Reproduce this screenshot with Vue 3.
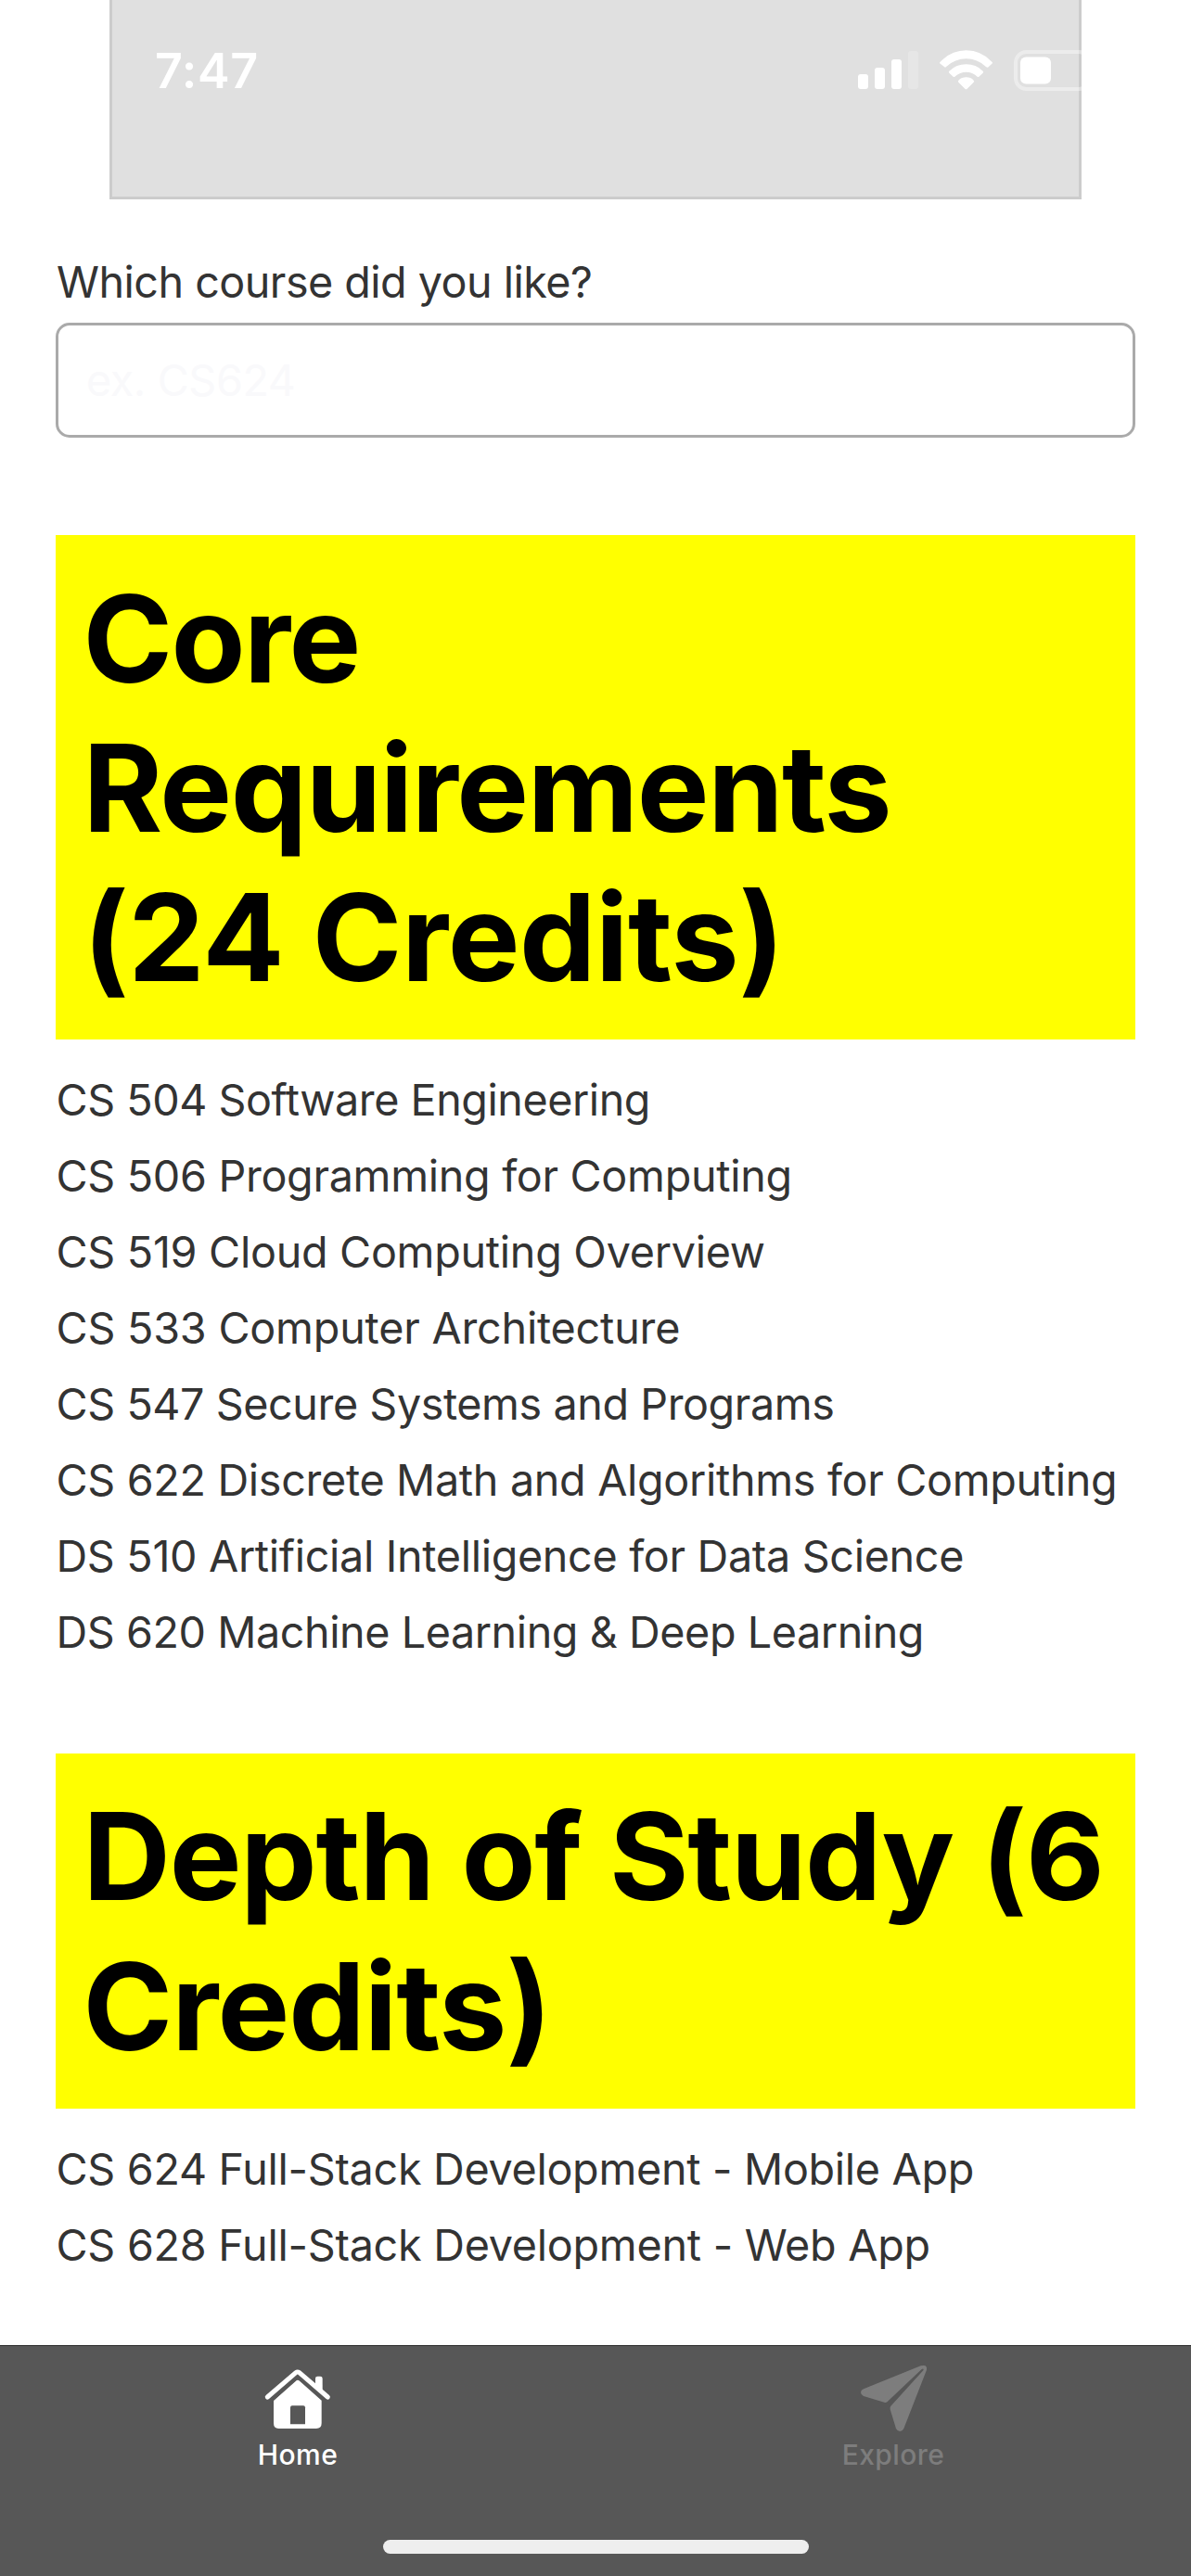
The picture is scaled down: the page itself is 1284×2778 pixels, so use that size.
<script setup>
// `tracking` is the letter spacing of a line, in pixels.
const sections = [
  {
    id: 'core',
    title: [
      { text: 'Core', tracking: -1.6 },
      { text: 'Requirements', tracking: -1.4 },
      { text: '(24 Credits)', tracking: -0.4 },
    ],
    courses: [
      { name: 'CS 504 Software Engineering', tracking: -0.46 },
      { name: 'CS 506 Programming for Computing', tracking: -0.31 },
      { name: 'CS 519 Cloud Computing Overview', tracking: -0.29 },
      { name: 'CS 533 Computer Architecture', tracking: -0.21 },
      { name: 'CS 547 Secure Systems and Programs', tracking: -0.43 },
      { name: 'CS 622 Discrete Math and Algorithms for Computing', tracking: -0.32 },
      { name: 'DS 510 Artificial Intelligence for Data Science', tracking: -0.32 },
      { name: 'DS 620 Machine Learning & Deep Learning', tracking: -0.43 },
    ],
  },
  {
    id: 'depth',
    title: [
      { text: 'Depth of Study (6', tracking: -1.2 },
      { text: 'Credits)', tracking: -0.9 },
    ],
    courses: [
      { name: 'CS 624 Full-Stack Development - Mobile App', tracking: -0.3 },
      { name: 'CS 628 Full-Stack Development - Web App', tracking: -0.26 },
    ],
  },
]
</script>

<template>
  <div class="screen">
    <header class="banner">
      <span class="time">7:47</span>
      <div class="status">
        <svg class="signal" viewBox="0 0 65 42" fill="#fff">
          <rect x="0" y="25" width="11" height="16" rx="3" />
          <rect x="18" y="18" width="11" height="23" rx="3" />
          <rect x="36" y="9" width="11" height="32" rx="3" />
          <rect x="54" y="0" width="11" height="41" rx="3" opacity="0.2" />
        </svg>
        <svg class="wifi" viewBox="0 0 171 129" fill="#fff">
          <path d="M2 38Q38 1 86 1T169 38Q173 41 169 44L156 56Q153 57 150 54Q122 28 86 28T21 54Q18 57 15 54L2 44Q-2 41 2 38Z" />
          <path d="M31 68Q54 46 86 46T140 68Q143 71 140 74L127 86Q125 88 122 86Q106 71 86 71T49 86Q46 88 44 86L31 74Q28 71 31 68Z" />
          <path d="M61 98Q71 88 86 88T110 98Q113 101 110 104L89 125Q86 128 82 125L61 104Q58 101 61 98Z" />
        </svg>
        <svg class="battery" viewBox="0 0 84 44">
          <rect x="2" y="2" width="80" height="40" rx="11.500" fill="none" stroke="#fff" stroke-width="4" opacity="0.38" />
          <rect x="7" y="7.500" width="33" height="29" rx="6" fill="#fff" />
        </svg>
      </div>
    </header>

    <main class="content">
      <label class="question" for="course">Which course did you like?</label>
      <input id="course" class="field" type="text" placeholder="ex. CS624" />

      <section v-for="section in sections" :key="section.id" class="section">
        <h1 class="heading">
          <span
            v-for="line in section.title"
            :key="line.text"
            class="heading-line"
            :style="{ letterSpacing: line.tracking + 'px' }"
          >{{ line.text }}</span>
        </h1>
        <ul class="courses">
          <li
            v-for="course in section.courses"
            :key="course.name"
            :style="{ letterSpacing: course.tracking + 'px' }"
          >{{ course.name }}</li>
        </ul>
      </section>
    </main>

    <nav class="tabs">
      <div class="tab-row">
        <a class="tab active">
          <svg class="icon" viewBox="0 0 213 213">
            <g transform="translate(-2 12)">
              <path d="M29 101L98 39Q106 31 114 39L184 101V175Q184 192 167 192H45Q29 192 29 175Z" fill="currentColor" />
              <path d="M11 92L103 11Q108 7 114 11L206 92" fill="none" stroke="#575757" stroke-width="27" stroke-linejoin="round" transform="translate(0 7)" />
              <path d="M9 90L101 11Q106 7 112 11L204 90" fill="none" stroke="currentColor" stroke-width="15" stroke-linecap="round" stroke-linejoin="round" />
              <path d="M164 50V30Q164 23 171 23H180Q187 23 187 30V72Z" fill="currentColor" />
              <path d="M83 178V124Q83 118 89 118H125Q131 118 131 124V178Z" fill="#575757" />
            </g>
          </svg>
          <span>Home</span>
        </a>
        <a class="tab">
          <svg class="icon" viewBox="0 0 213 213">
            <path d="M9 76L194 1Q204 -1 209 1Q215 5 213 14L139 204Q135 213 127 213Q118 212 114 204L95 142Q94 135 97 131L202 16Q204 12 202 11Q200 10 197 12L86 117Q81 121 76 119L9 99Q0 95 0 87Q0 80 9 76Z" fill="currentColor" />
          </svg>
          <span>Explore</span>
        </a>
      </div>
      <div class="home-indicator"></div>
    </nav>
  </div>
</template>

<style>
body {
  background: #fff;
}
</style>

<style scoped>
.screen {
  display: flex;
  flex-direction: column;
  width: 1284px;
  height: 2778px;
  overflow: hidden;
  background: #fff;
  font-family: Inter, "Liberation Sans", sans-serif;
}

.banner {
  box-sizing: border-box;
  display: flex;
  justify-content: space-between;
  align-items: flex-start;
  width: 1048px;
  height: 215px;
  margin: 0 auto;
  padding: 54px 0 0 46px;
  border: 3px solid #ccc;
  border-top: 0;
  background: #e0e0e0;
  color: #fff;
}

.time {
  font-size: 52px;
  font-weight: 600;
  letter-spacing: 0.6px;
  line-height: 46px;
}

.status {
  display: flex;
  width: 238px;
}

.status svg {
  flex: none;
  display: block;
}

.signal {
  width: 65px;
  height: 42px;
  margin-top: 1px;
}

.wifi {
  width: 57px;
  height: 43px;
  margin-left: 23px;
}

.battery {
  width: 84px;
  height: 44px;
  margin-left: 23px;
}

.content {
  flex: 1;
  padding: 59px 60px 0;
}

.question {
  display: block;
  padding-left: 1px;
  color: #333;
  font-size: 46.7px;
  letter-spacing: -0.53px;
  line-height: 60px;
}

.field {
  display: block;
  box-sizing: border-box;
  width: 100%;
  height: 124px;
  margin-top: 14px;
  padding: 0 30px;
  border: 3px solid #aaa;
  border-radius: 15px;
  background: #fff;
  font: 46.7px Inter, "Liberation Sans", sans-serif;
  letter-spacing: -0.4px;
}

.field::placeholder {
  color: #f9f9fb;
  opacity: 1;
}

.section {
  margin-top: 90px;
}

.field + .section {
  margin-top: 105px;
}

.heading {
  box-sizing: border-box;
  margin: 0;
  padding: 30.5px 29.5px 29.5px;
  background: #ff0;
  color: #000;
  font-size: 130.7px;
  font-weight: 700;
  line-height: 161.33px;
  white-space: nowrap;
}

.heading-line {
  display: block;
}

.courses {
  margin: 24px 0 0;
  padding: 0 0 0 0.5px;
  list-style: none;
  color: #333;
  font-size: 46.7px;
  line-height: 82px;
  white-space: nowrap;
}

.tabs {
  box-sizing: border-box;
  display: flex;
  flex-direction: column;
  align-items: center;
  justify-content: space-between;
  height: 249px;
  padding: 21px 0 24px;
  border-top: 1px solid #2a2a2a;
  background: #575757;
}

.tab-row {
  display: flex;
  width: 100%;
}

.tab {
  flex: 1;
  display: flex;
  flex-direction: column;
  align-items: center;
  color: #7d7d7d;
  font-size: 30px;
  font-weight: 500;
  letter-spacing: 0.4px;
  line-height: 36px;
}

.tab.active {
  color: #fff;
}

.icon {
  width: 71px;
  height: 71px;
  margin-bottom: 7px;
  overflow: visible;
}

.home-indicator {
  width: 459px;
  height: 15px;
  border-radius: 8px;
  background: #eee;
}
</style>
